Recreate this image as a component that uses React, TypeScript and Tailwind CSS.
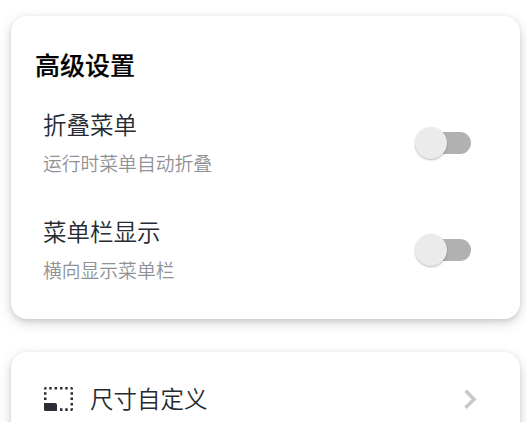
import React from "react";

function Toggle() {
  return (
    <div className="mt-[17px] flex h-[34px] w-[56px] items-center">
      <div className="z-10 h-8 w-8 shrink-0 rounded-full bg-[#ebebeb] shadow-[0_1px_2px_rgba(0,0,0,0.28)]" />
      <div className="-ml-4 h-[22px] w-10 shrink-0 rounded-r-full bg-[#b1b1b1]" />
    </div>
  );
}

function SettingRow({ title, detail }: { title: string; detail: string }) {
  return (
    <div className="flex h-[107px] justify-between pr-[49px] pl-8">
      <div>
        <div className="-mt-[2px] text-[23.5px] leading-[34px] font-[350] text-[#262a32]">{title}</div>
        <div className="mt-[8px] text-[18.8px] leading-[28px] font-[350] text-[#8f9196]">{detail}</div>
      </div>
      <Toggle />
    </div>
  );
}

export default function App() {
  return (
    <div className="h-[422px] overflow-hidden bg-white pt-4 pr-[7px] pl-[11px] font-['Noto_Sans_CJK_SC',sans-serif]">
      <section className="h-[303px] rounded-[16px] bg-white shadow-[0_4px_14px_rgba(0,0,0,0.14),0_2px_5px_rgba(0,0,0,0.12)]">
        <h1 className="pt-[30px] pl-6 text-[25px] leading-9 font-medium text-black [-webkit-text-stroke:0.2px_black]">高级设置</h1>
        <div className="pt-[27px]">
          <SettingRow title="折叠菜单" detail="运行时菜单自动折叠" />
          <SettingRow title="菜单栏显示" detail="横向显示菜单栏" />
        </div>
      </section>
      <section className="mt-[33px] h-[100px] rounded-[16px] bg-white shadow-[0_4px_14px_rgba(0,0,0,0.14),0_2px_5px_rgba(0,0,0,0.12)]">
        <div className="flex h-[94px] items-center pr-[43px] pl-[33px]">
          <svg width="30" height="24" viewBox="0 0 30 24" fill="#2b2e35">
            <path d="M0 16h11q2 0 2 2v6H1.500q-1.500 0-1.500-1.500z" />
            <path d="M1.500 0h1v2.500H0v-1Q0 0 1.500 0zM5.200 0h2.500v2.500H5.200zM10.600 0h2.500v2.500h-2.500zM16 0h2.500v2.500H16zM21.200 0h2.500v2.500h-2.500zM26.500 0h1Q29 0 29 1.500v1h-2.500zM0 5.300h2.500v2.500H0zM0 10.600h2.500v2.500H0zM26.500 5.300H29v2.500h-2.500zM26.500 10.600H29v2.500h-2.500zM26.500 15.900H29v2.500h-2.500zM26.500 21.300H29v1Q29 24 27.500 24h-1zM21.200 21.300h2.500V24h-2.500zM16 21.300h2.500V24H16z" />
          </svg>
          <span className="ml-4 text-[23.5px] font-[350] text-[#262a32]">尺寸自定义</span>
          <svg className="ml-auto" width="14" height="20" viewBox="0 0 14 20" fill="none" stroke="#c8c8c8" strokeWidth="3.5">
            <path d="m2.500 1.800 8.500 8.500-8.500 8.500" />
          </svg>
        </div>
      </section>
    </div>
  );
}
